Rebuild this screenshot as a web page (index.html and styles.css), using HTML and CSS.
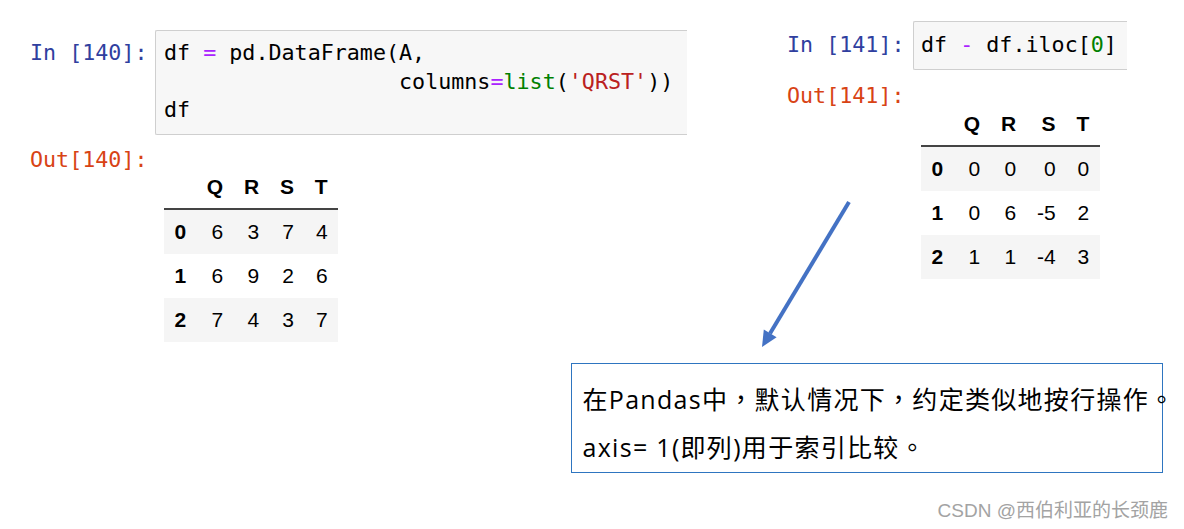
FILE: index.html
```html
<!DOCTYPE html>
<html lang="zh">
<head>
<meta charset="utf-8">
<title>Pandas broadcasting</title>
<link rel="stylesheet" href="styles.css">
</head>
<body>
<div class="page">
  <div class="cells">
    <section class="cell cell-left">
      <div class="in-row">
        <div class="prompt in">In&nbsp;[140]:</div>
        <div class="code code-wide">
          <div class="line">df <span class="op">=</span> pd.DataFrame(A,</div>
          <div class="line">                  columns<span class="op">=</span><span class="bi">list</span>(<span class="str">'QRST'</span>))</div>
          <div class="line">df</div>
        </div>
      </div>
      <div class="out-row">
        <div class="prompt out">Out[140]:</div>
        <table class="df">
          <thead>
            <tr><th></th><th>Q</th><th>R</th><th>S</th><th>T</th></tr>
          </thead>
          <tbody>
            <tr><th>0</th><td>6</td><td>3</td><td>7</td><td>4</td></tr>
            <tr><th>1</th><td>6</td><td>9</td><td>2</td><td>6</td></tr>
            <tr><th>2</th><td>7</td><td>4</td><td>3</td><td>7</td></tr>
          </tbody>
        </table>
      </div>
    </section>
    <section class="cell cell-right">
      <div class="in-row">
        <div class="prompt in">In&nbsp;[141]:</div>
        <div class="code code-narrow">
          <div class="line">df <span class="op">-</span> df.iloc[<span class="num">0</span>]</div>
        </div>
      </div>
      <div class="out-row">
        <div class="prompt out">Out[141]:</div>
        <table class="df">
          <thead>
            <tr><th></th><th>Q</th><th>R</th><th>S</th><th>T</th></tr>
          </thead>
          <tbody>
            <tr><th>0</th><td>0</td><td>0</td><td>0</td><td>0</td></tr>
            <tr><th>1</th><td>0</td><td>6</td><td>-5</td><td>2</td></tr>
            <tr><th>2</th><td>1</td><td>1</td><td>-4</td><td>3</td></tr>
          </tbody>
        </table>
      </div>
    </section>
  </div>

  <div class="note" lang="zh-TW">
    <p class="note-line">在Pandas中，默认情况下，约定类似地按行操作。</p>
    <p class="note-line">axis= 1(即列)用于索引比较。</p>
  </div>

  <div class="watermark">CSDN @西伯利亚的长颈鹿</div>

  <svg class="arrow" width="1184" height="529" viewBox="0 0 1184 529" aria-hidden="true">
    <line x1="849" y1="202" x2="770" y2="333.5" stroke="#4472c4" stroke-width="4"/>
    <polygon points="762,347 763.8,329.5 776.6,337.2" fill="#4472c4"/>
  </svg>
</div>
</body>
</html>
```

FILE: styles.css
```css
* {
  box-sizing: border-box;
}

html, body {
  margin: 0;
  padding: 0;
  background: #ffffff;
}

.page {
  position: relative;
  width: 1184px;
  height: 529px;
  overflow: hidden;
  background: #ffffff;
}

.cells {
  display: flex;
  align-items: flex-start;
}

.cell-left {
  width: 787px;
  padding-left: 30px;
  padding-top: 30px;
}

.cell-right {
  flex: 1;
  padding-top: 21px;
}

.in-row,
.out-row {
  display: flex;
  align-items: flex-start;
}

.prompt {
  font-family: "DejaVu Sans Mono", "Liberation Mono", monospace;
  font-size: 21.7px;
  line-height: 28.5px;
  white-space: pre;
  flex: none;
}

.cell-left .prompt {
  width: 125px;
}

.cell-right .prompt {
  width: 126px;
}

.prompt.in {
  color: #303f9f;
  padding-top: 9px;
}

.cell-right .prompt.in {
  padding-top: 10.25px;
}

.prompt.out {
  color: #d84315;
}

.out-row {
  margin-top: 10.75px;
}

.cell-right .out-row {
  margin-top: 11.75px;
}

.code {
  font-family: "DejaVu Sans Mono", "Liberation Mono", monospace;
  font-size: 21.7px;
  line-height: 28.5px;
  color: #000000;
  background: #f7f7f7;
  border: 1px solid #cfcfcf;
  border-right: none;
  border-radius: 2px 0 0 2px;
}

.line {
  white-space: pre;
  height: 28.5px;
}

.code-wide {
  width: 532px;
  padding: 8px 0 9.5px 8px;
}

.code-narrow {
  width: 214px;
  padding: 9.25px 0 9.25px 7px;
}

.op {
  color: #aa22ff;
}

.bi {
  color: #008000;
}

.str {
  color: #ba2121;
}

.num {
  color: #008000;
}

.df {
  border-collapse: collapse;
  border-spacing: 0;
  font-family: "Liberation Sans", Arial, sans-serif;
  font-size: 21px;
  color: #000000;
  margin-top: 20.25px;
  margin-left: 9px;
}

.cell-right .df {
  margin-top: 20.75px;
  margin-left: 8px;
}

.df th,
.df td {
  padding: 0 10.4px;
  text-align: right;
  vertical-align: middle;
  white-space: nowrap;
}

.df th {
  font-weight: bold;
}

.df thead th {
  line-height: 42px;
  border-bottom: 2px solid #444444;
}

.df tbody th,
.df tbody td {
  line-height: 44px;
}

.df tbody tr:nth-child(odd) {
  background: #f5f5f5;
}

.note {
  margin-top: 21px;
  margin-left: 571px;
  width: 592px;
  border: 1.5px solid #2e75c0;
  padding: 11px 0 0 10.5px;
  height: 110px;
}

.note-line {
  margin: 0;
  font-family: "Open Sans", "Noto Sans CJK TC", sans-serif;
  font-size: 25px;
  line-height: 48px;
  color: #000000;
  white-space: nowrap;
  letter-spacing: 1.3px;
}

.watermark {
  margin-top: 26px;
  padding-right: 16px;
  text-align: right;
  font-family: "Liberation Sans", "Noto Sans CJK SC", sans-serif;
  font-size: 19px;
  line-height: 24px;
  color: #a3a3a3;
}

.arrow {
  position: absolute;
  left: 0;
  top: 0;
  pointer-events: none;
}
```
